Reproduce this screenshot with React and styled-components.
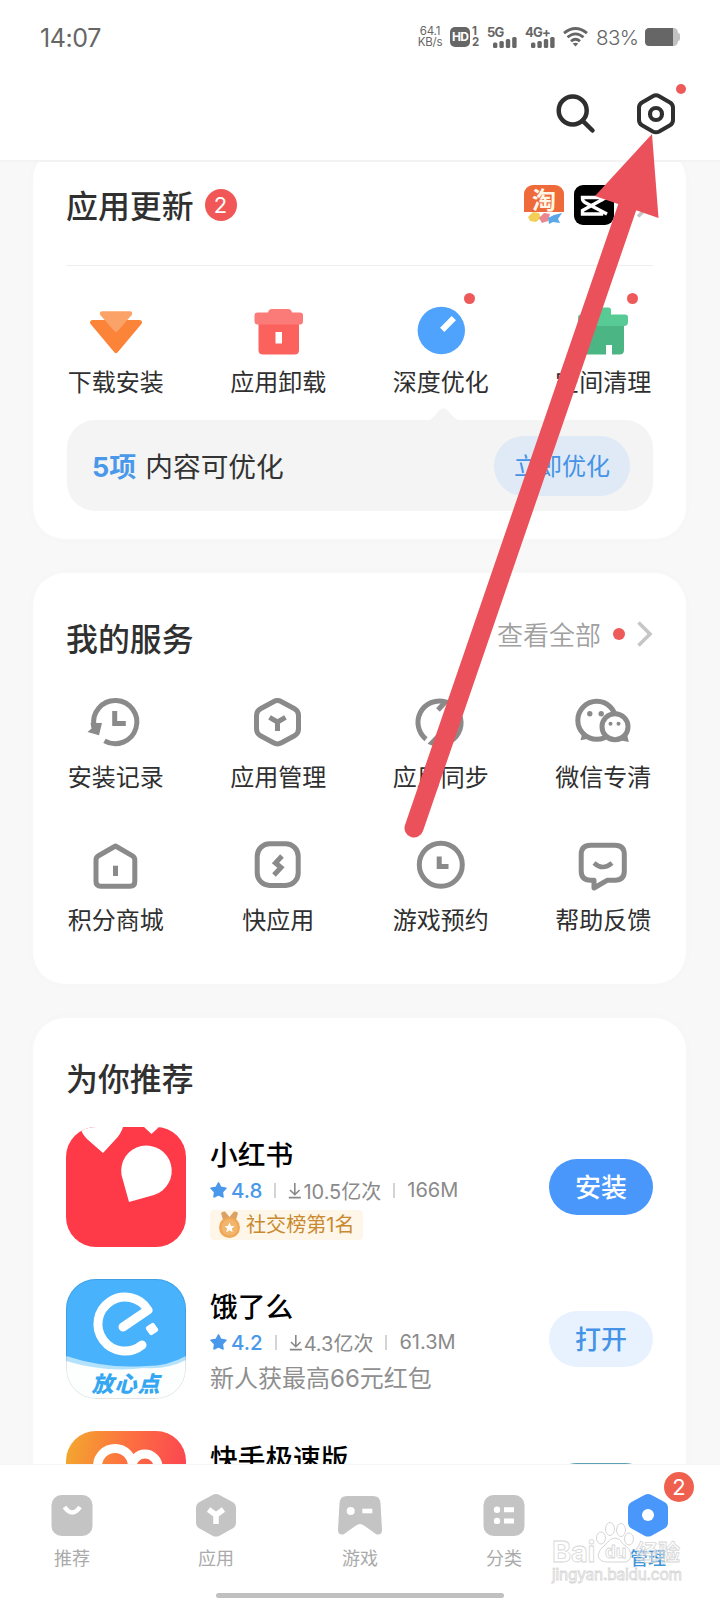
import * as React from 'react'
import styled, { createGlobalStyle, css } from 'styled-components'

const GlobalStyle = createGlobalStyle`
    * {
        box-sizing: border-box;
    }

    body {
        margin: 0;
        background: #fff;
    }
`

const Phone = styled.div`
    position: relative;
    display: flex;
    flex-direction: column;
    width: 720px;
    height: 1600px;
    overflow: hidden;
    background: #fff;
    color: #333;
    font-family: Inter, 'Noto Sans CJK SC', sans-serif;
    white-space: nowrap;

    svg {
        display: block;
        flex: none;
    }
`

/* status bar */

const StatusBar = styled.div`
    display: flex;
    align-items: center;
    height: 74px;
    padding: 0 40px 0 40px;
    color: #666;
`

const Clock = styled.div`
    flex: 1;
    padding-top: 2px;
    font-size: 25px;
    letter-spacing: -0.4px;
`

const Speed = styled.div`
    width: 26px;
    margin-right: 7px;
    font-size: 11.5px;
    line-height: 11.5px;
    text-align: center;
    letter-spacing: -0.2px;
`

const HdBox = styled.div`
    width: 20px;
    height: 20px;
    border-radius: 5px;
    background: #666;
    color: #fff;
    font-size: 12px;
    font-weight: 700;
    line-height: 20px;
    text-align: center;
    letter-spacing: -0.8px;
`

const SimNumbers = styled.div`
    width: 8px;
    margin: 0 7px 0 2px;
    font-size: 11.5px;
    font-weight: 700;
    line-height: 11px;
`

const Signal = styled.div`
    display: flex;
    flex-direction: column;
    width: 30px;
    height: 21px;
    margin-right: 8px;
    font-size: 13px;
    font-weight: 700;
    line-height: 11px;
    letter-spacing: -0.8px;

    svg {
        margin: -2px 0 0 6px;
    }
`

const Percent = styled.div`
    width: 43px;
    margin: 0 6px 0 8px;
    font-size: 20.5px;
    font-weight: 300;
    letter-spacing: -0.6px;
`

/* header */

const Header = styled.div`
    display: flex;
    align-items: flex-start;
    justify-content: flex-end;
    gap: 34px;
    height: 88px;
    padding: 16px 40px 0 0;
    border-bottom: 2px solid #f3f3f3;
`

const IconButton = styled.div`
    position: relative;
`

const Dot = styled.span`
    flex: none;
    width: ${p => p.$size || 11}px;
    height: ${p => p.$size || 11}px;
    border-radius: 50%;
    background: #ee5a5a;

    ${p => p.$float && css`
        position: absolute;
        top: ${p.$top}px;
        right: ${p.$right}px;
    `}
`

/* cards */

const Content = styled.div`
    height: 1302px;
    padding: 0 34px 0 33px;
    overflow: hidden;
    background: #f8f8f8;
`

const Card = styled.div`
    margin-bottom: 34px;
    padding-top: ${p => p.$top}px;
    padding-bottom: ${p => p.$bottom}px;
    border-radius: 32px;
    background: #fff;
    box-shadow: 0 0 14px rgba(0, 0, 0, 0.015);

    &:first-child {
        margin-top: -14px;
    }
`

const CardHead = styled.div`
    display: flex;
    align-items: center;
    height: ${p => p.$height || 60}px;
    padding: 0 33px;
`

const CardTitle = styled.h2`
    flex: 1;
    display: flex;
    align-items: center;
    gap: 11px;
    margin: 0;
    padding-top: 1px;
    font-size: 31.9px;
    font-weight: 500;
    line-height: 40px;
    color: #303030;
`

const CountBadge = styled.span`
    width: ${p => p.$size || 32}px;
    height: ${p => p.$size || 32}px;
    border-radius: 50%;
    background: ${p => p.$color || '#f15756'};
    color: #fff;
    font-size: 22px;
    font-weight: 400;
    line-height: ${p => p.$size || 32}px;
    text-align: center;
`

const TitleBadge = styled(CountBadge)`
    margin-top: -3px;
`

const Updates = styled.div`
    display: flex;
    align-items: center;
    gap: 10px;
    margin-top: -2px;
`

const TaobaoIcon = styled.div`
    position: relative;
    width: 40px;
    height: 40px;
    border-radius: 9px;
    overflow: hidden;
    background: linear-gradient(#ee6a3a 0 67%, #fff 68%);
    color: #fff6e6;
    font-size: 24px;
    font-weight: 700;
    line-height: 31px;
    text-align: center;

    svg {
        position: absolute;
        left: 0;
        bottom: 0;
    }
`

const Divider = styled.div`
    height: 1px;
    margin: 15px 33px 35px;
    background: #efefef;
`

const IconGrid = styled.div`
    display: grid;
    grid-template-columns: repeat(4, 1fr);
    row-gap: 42px;
    padding: 0 1.5px;
    margin-top: ${p => p.$top || 0}px;
`

const GridItem = styled.div`
    position: relative;
    display: flex;
    flex-direction: column;
    align-items: center;
    gap: ${p => p.$gap || 11}px;
    font-size: 24px;
    line-height: 30px;
    color: #2f2f2f;
`

const Tip = styled.div`
    position: relative;
    display: flex;
    align-items: center;
    justify-content: space-between;
    height: 91px;
    margin: 22px 33px 0 34px;
    padding: 0 23px 0 25px;
    border-radius: 28px;
    background: #f4f4f4;
    font-size: 27.7px;

    > svg {
        position: absolute;
        top: -13px;
        left: 359px;
    }

    b {
        margin-right: 9px;
        font-size: 27px;
        color: #4a98ea;
    }
`

const TipText = styled.div`
    margin-top: 4px;
    line-height: 40px;
`

const TipButton = styled.div`
    width: 136px;
    height: 60px;
    border-radius: 30px;
    background: #dfeaf6;
    color: #4593e6;
    font-size: 24px;
    line-height: 62px;
    text-align: center;
`

const More = styled.div`
    display: flex;
    align-items: center;
    margin-top: -11px;
    font-size: 26px;
    font-weight: 350;
    color: #a0a0a0;

    span {
        margin: 0 12px 0 12px;
    }
`

/* recommended apps */

const AppList = styled.div`
    display: flex;
    flex-direction: column;
    gap: 32px;
    margin-top: 18px;
    padding: 0 33px;
`

const AppRow = styled.div`
    display: flex;
    align-items: center;
    height: 120px;
`

const AppIcon = styled.div`
    position: relative;
    width: 120px;
    height: 120px;
    border-radius: 30px;
    overflow: hidden;
`

const IconCaption = styled.div`
    position: absolute;
    left: 0;
    bottom: 5px;
    width: 100%;
    color: #35a7f2;
    font-size: 22px;
    font-weight: 900;
    font-style: italic;
    line-height: 20px;
    letter-spacing: 1px;
    text-align: center;
`

const AppInfo = styled.div`
    flex: 1;
    align-self: flex-start;
    padding: 9.5px 0 0 24px;
`

const AppName = styled.div`
    font-size: 27.7px;
    font-weight: 500;
    line-height: 36px;
    color: #000;
`

const Meta = styled.div`
    display: flex;
    align-items: center;
    height: 24px;
    margin-top: 5.5px;
    font-size: 20px;
    font-weight: 400;
    color: #8a8a8a;

    b {
        margin-left: 4px;
        font-size: 20.5px;
        font-weight: 500;
        color: #4a98ea;
    }

    i {
        width: 2px;
        height: 15px;
        margin: 0 12px 0 12px;
        background: #d4d4d4;
    }
`

const Tag = styled.div`
    display: inline-flex;
    align-items: center;
    gap: 5px;
    height: 30px;
    margin-top: 8px;
    padding: 0 8px 0 8px;
    border-radius: 4px;
    background: #fff6ea;
    color: #c98a2f;
    font-size: 20.1px;
    line-height: 29px;
`

const Desc = styled.div`
    margin-top: 10px;
    font-size: 24px;
    font-weight: 400;
    line-height: 30px;
    color: #8f8f8f;
`

const Pill = styled.div`
    width: 104px;
    height: 56px;
    border-radius: 28px;
    background: ${p => (p.$primary ? '#4a97fb' : '#e8f2fe')};
    border-top: ${p => (p.$edge ? '2px solid #5f9fb4' : 'none')};
    color: ${p => (p.$primary ? '#fff' : '#4593e6')};
    font-size: 26px;
    font-weight: 500;
    line-height: 57px;
    text-align: center;
`

/* bottom navigation */

const Nav = styled.div`
    display: flex;
    height: 129px;
    padding-top: 20px;
    border-top: 1px solid #f6f6f6;
`

const NavItem = styled.div`
    position: relative;
    flex: 1;
    display: flex;
    flex-direction: column;
    align-items: center;
    gap: 1px;
    font-size: 18px;
    line-height: 26px;
    color: ${p => (p.$active ? '#3f95d8' : '#aaa')};
    font-weight: ${p => (p.$active ? 500 : 400)};
`

const NavBadge = styled(CountBadge)`
    position: absolute;
    top: -13px;
    right: 26px;
`

const HomeBar = styled.div`
    width: 288px;
    height: 5px;
    margin: 0 auto;
    border-radius: 3px;
    background: #c0c0c0;
`

const Arrow = styled.svg`
    position: absolute;
    top: 0;
    left: 0;
`

const Watermark = styled.div`
    position: absolute;
    top: 1520px;
    left: 552px;
    width: 140px;
    color: rgba(255, 255, 255, 0.4);
    -webkit-text-stroke: 0.8px #d6d6d6;

    svg {
        position: absolute;
        top: 1px;
        left: 43px;
    }
`

const WatermarkName = styled.div`
    position: relative;
    display: flex;
    align-items: center;
    height: 46px;
    padding-top: 18px;
    font-size: 22px;
    font-weight: 700;
    line-height: 28px;
`

const WatermarkBai = styled.span`
    width: 53px;
    font-size: 29px;
    letter-spacing: -0.2px;
`

const WatermarkDu = styled.span`
    width: 31px;
    font-size: 17px;
`

const WatermarkUrl = styled.div`
    font-size: 15.4px;
    line-height: 18px;
    letter-spacing: -0.2px;
`

const HEX = 'M25.5 9.7Q29.5 7.5 33.5 9.7L46.5 16.8Q50.5 19 50.5 23.5V37Q50.5 41.5 46.5 43.7L33.5 50.8Q29.5 53 25.5 50.8L12.5 43.7Q8.5 41.5 8.5 37V23.5Q8.5 19 12.5 16.8Z'
const HEX_FILL = 'M26.5 10Q30 8.2 33.5 10L46.5 17Q50 19 50 23V37.5Q50 41.5 46.5 43.5L33.5 50.7Q30 52.5 26.5 50.7L13.5 43.5Q10 41.5 10 37.5V23Q10 19 13.5 17Z'

const Glyph = ({ children }) => (
    <svg width="60" height="60" viewBox="0 0 60 60" fill="none">{children}</svg>
)

const LineGlyph = ({ children }) => (
    <svg width="60" height="60" viewBox="0 0 60 60" fill="none" stroke="#8a8a8a" strokeWidth="5">{children}</svg>
)

const Bars = () => (
    <svg width="24" height="12" viewBox="0 0 24 12" fill="#666">
        <rect x="0" y="6.5" width="4.4" height="5.5" rx="1.5" />
        <rect x="6.4" y="5" width="4.4" height="7" rx="1.5" />
        <rect x="12.8" y="3" width="4.4" height="9" rx="1.5" />
        <rect x="19.2" y="1" width="4.4" height="11" rx="1.5" />
    </svg>
)

const Chevron = () => (
    <svg width="16" height="26" viewBox="0 0 16 26" fill="none">
        <path d="M1.5 1.5L13 13L1.5 24.5" stroke="#c6c6c6" strokeWidth="3.6" />
    </svg>
)

const Star = () => (
    <svg width="17" height="16" viewBox="0 0 17 16" fill="#4a98ea">
        <path d="M8.5 .8L10.9 5.3L16 6.2L12.4 9.9L13.1 15L8.5 12.9L3.9 15L4.6 9.9L1 6.2L6.1 5.3Z" stroke="#4a98ea" strokeWidth="1.4" strokeLinejoin="round" />
    </svg>
)

const Download = () => (
    <svg width="15" height="17" viewBox="0 0 15 17" fill="none" stroke="#888" strokeWidth="1.6">
        <path d="M6.8 1V12.5M2 8L6.8 12.7L11.6 8M.8 15.6H12.8" />
    </svg>
)

const Medal = () => (
    <svg width="23" height="28" viewBox="0 0 23 28">
        <path d="M3 2Q4.5 0 7 0.5L11.5 6L16 0.5Q18.5 0 20 2L18 9L5 9Z" fill="#dba064" />
        <circle cx="11.5" cy="16.5" r="10.5" fill="#efa755" />
        <circle cx="11.5" cy="16.5" r="8.2" fill="#f2b56c" />
        <path d="M11.5 11.5L13 15L16.5 15.3L13.8 17.6L14.7 21.2L11.5 19.3L8.3 21.2L9.2 17.6L6.5 15.3L10 15Z" fill="#fff" />
    </svg>
)

const actions = [
    {
        label: '下载安装',
        icon: (
            <Glyph>
                <path d="M6.5 21.5H53.5L30 49.5Z" fill="#fb8438" stroke="#fb8438" strokeWidth="5" strokeLinejoin="round" />
                <path d="M16 12.5H44L30 28.5Z" fill="#faa268" stroke="#faa268" strokeWidth="4.5" strokeLinejoin="round" />
            </Glyph>
        ),
    },
    {
        label: '应用卸载',
        icon: (
            <Glyph>
                <path d="M10.5 20H51V49Q51 53.5 46.5 53.5H15Q10.5 53.5 10.5 49Z" fill="#fb625e" />
                <path d="M20 11.5Q20.5 8 24 8H40Q43.5 8 44 11.5H52Q55 11.5 55 14.5V20Q55 23.5 52 23.5H9.5Q6.5 23.5 6.5 20V14.5Q6.5 11.5 9.5 11.5Z" fill="#fb7b78" />
                <rect x="27.5" y="31" width="6.5" height="11.5" fill="#fff" />
            </Glyph>
        ),
    },
    {
        label: '深度优化',
        dot: 47,
        icon: (
            <Glyph>
                <circle cx="30.3" cy="29.5" r="23.7" fill="#50a3fc" />
                <path d="M31.2 28.8L42.8 17.2" stroke="#fff" strokeWidth="6" />
            </Glyph>
        ),
    },
    {
        label: '空间清理',
        dot: 47,
        icon: (
            <Glyph>
                <path d="M10 20H51V49Q51 53.5 46.5 53.5H39V44H33V53.5H14Q10 53.5 10 49Z" fill="#4bb583" />
                <path d="M23 13.5V9Q23 6.5 25.5 6.5H35.5Q38 6.5 38 9V13.5H52Q55 13.5 55 16.5V21Q55 25 51 25H9Q5 25 5 21V16.5Q5 13.5 8 13.5Z" fill="#58cb94" />
            </Glyph>
        ),
    },
]

const services = [
    {
        label: '安装记录',
        icon: (
            <LineGlyph>
                <path d="M18.5 48.8A21.6 21.6 0 1 0 8 34" />
                <path d="M28.7 19V31.5H39.8" />
                <path d="M1.5 40L5.5 36.5L4.5 31L16 31L13 43.3Z" fill="#8a8a8a" stroke="none" />
            </LineGlyph>
        ),
    },
    {
        label: '应用管理',
        icon: (
            <LineGlyph>
                <path d={HEX} />
                <path d="M21.5 25.3L29.5 30L37.5 25.3M29.5 29V39" />
            </LineGlyph>
        ),
    },
    {
        label: '应用同步',
        icon: (
            <LineGlyph>
                <path d="M15 47.2A21.5 21.5 0 0 1 34.5 9.8L27 18" />
                <path d="M41.5 13.5A21.5 21.5 0 0 1 21 50.8L29 42.5" />
            </LineGlyph>
        ),
    },
    {
        label: '微信专清',
        icon: (
            <LineGlyph>
                <circle cx="23.8" cy="28.3" r="19" />
                <path d="M10 39L7.5 48.3L19.5 46Z" fill="#8a8a8a" stroke="none" />
                <path d="M53.5 40L55.8 50L45.5 48Z" fill="#8a8a8a" stroke="none" />
                <circle cx="42" cy="34.7" r="13" fill="#fff" />
                <g fill="#8a8a8a" stroke="none">
                    <circle cx="16.8" cy="21.7" r="2.7" />
                    <circle cx="28.2" cy="21.7" r="2.7" />
                    <circle cx="37.5" cy="31.7" r="2" />
                    <circle cx="45.5" cy="31.7" r="2" />
                </g>
            </LineGlyph>
        ),
    },
    {
        label: '积分商城',
        icon: (
            <LineGlyph>
                <path d="M29.5 11L46.5 20.8Q48.8 22.2 48.8 25V46.5Q48.8 51.2 44.1 51.2H14.7Q10 51.2 10 46.5V25Q10 22.2 12.5 20.8Z" strokeLinejoin="round" />
                <path d="M29.5 30.7V41" />
            </LineGlyph>
        ),
    },
    {
        label: '快应用',
        icon: (
            <LineGlyph>
                <rect x="9.2" y="8.7" width="41" height="41.8" rx="12.5" />
                <path d="M34 21L27.5 28L33 32.5L26 40" />
            </LineGlyph>
        ),
    },
    {
        label: '游戏预约',
        icon: (
            <LineGlyph>
                <circle cx="29.8" cy="29.7" r="21.5" />
                <path d="M28.2 21.5V31.5H37.5" />
            </LineGlyph>
        ),
    },
    {
        label: '帮助反馈',
        icon: (
            <LineGlyph>
                <path d="M17.5 10.2H42Q51.3 10.2 51.3 19.5V36Q51.3 45.2 42 45.2H34.5L21 53V45.2H17.5Q8.2 45.2 8.2 36V19.5Q8.2 10.2 17.5 10.2Z" strokeLinejoin="round" />
                <path d="M21 28Q29.8 36 39 28" strokeWidth="4.5" />
            </LineGlyph>
        ),
    },
]

const apps = [
    {
        name: '小红书',
        score: '4.8',
        installs: '10.5亿次',
        size: '166M',
        tag: '社交榜第1名',
        action: '安装',
        primary: true,
        icon: (
            <svg width="120" height="120" viewBox="0 0 120 120">
                <rect width="120" height="120" fill="#fe3a48" />
                <path d="M14 0H57Q55 7 49 13L37 26L21 12Q16 7 14 0Z" fill="#fff" />
                <path d="M78 0H93L85.5 7Z" fill="#fff" />
                <path d="M63 75L55.5 48A25.3 25.3 0 1 1 88 68Z" fill="#fff" />
            </svg>
        ),
    },
    {
        name: '饿了么',
        score: '4.2',
        installs: '4.3亿次',
        size: '61.3M',
        desc: '新人获最高66元红包',
        action: '打开',
        icon: (
            <>
                <svg width="120" height="120" viewBox="0 0 120 120">
                    <rect width="120" height="120" fill="#fdfefe" />
                    <path d="M0 0H120V81Q100 91 78 89Q40 94 0 82Z" fill="#b5e2fb" />
                    <path d="M0 0H120V77Q102 87 80 87Q40 90 0 77Z" fill="#48b2fd" />
                    <path d="M57 48L82 31A27 27 0 1 0 76 66" fill="none" stroke="#fff" strokeWidth="9" strokeLinejoin="round" strokeLinecap="round" />
                    <rect x="81" y="45" width="10" height="10" rx="2" fill="#fff" transform="rotate(-35 86 50)" />
                    <rect x=".5" y=".5" width="119" height="119" rx="29.5" fill="none" stroke="#000" strokeOpacity=".1" />
                </svg>
                <IconCaption>放心点</IconCaption>
            </>
        ),
    },
    {
        name: '快手极速版',
        action: '',
        edge: true,
        icon: (
            <svg width="120" height="120" viewBox="0 0 120 120">
                <defs>
                    <linearGradient id="ks" x1="0" y1="0.1" x2="1" y2="0.3">
                        <stop offset="0" stopColor="#f3a82e" />
                        <stop offset=".5" stopColor="#fd7040" />
                        <stop offset="1" stopColor="#fb4652" />
                    </linearGradient>
                </defs>
                <rect width="120" height="120" fill="url(#ks)" />
                <circle cx="49" cy="35" r="17.5" fill="none" stroke="#fff" strokeWidth="9" />
                <circle cx="79" cy="36" r="13" fill="none" stroke="#fff" strokeWidth="9" />
            </svg>
        ),
    },
]

const tabs = [
    {
        label: '推荐',
        icon: (
            <Glyph>
                <rect x="9.5" y="10" width="41" height="41" rx="10" fill="#c4c4c4" />
                <path d="M22.5 22Q30.3 33 38 22" stroke="#fff" strokeWidth="4.5" />
            </Glyph>
        ),
    },
    {
        label: '应用',
        icon: (
            <Glyph>
                <path d={HEX_FILL} fill="#c4c4c4" />
                <path d="M22.5 24.5L30 30L37.5 24.5M30 29V39" stroke="#fff" strokeWidth="5.5" />
            </Glyph>
        ),
    },
    {
        label: '游戏',
        icon: (
            <Glyph>
                <path d="M17 11H43Q50 11 50.5 18L52 45Q52 49.5 48 49.5Q46 49.5 44.5 48L34 40.5Q30 37.5 26 40.5L15.5 48Q14 49.5 12 49.5Q8 49.5 8 45L9.5 18Q10 11 17 11Z" fill="#c4c4c4" />
                <circle cx="20.7" cy="26" r="4" fill="#fff" />
                <rect x="32.3" y="23.7" width="10" height="4.6" fill="#fff" />
            </Glyph>
        ),
    },
    {
        label: '分类',
        icon: (
            <Glyph>
                <rect x="9.5" y="10" width="41" height="41" rx="10" fill="#c4c4c4" />
                <circle cx="23" cy="24.7" r="3.2" fill="#fff" />
                <circle cx="23" cy="35.9" r="3.2" fill="#fff" />
                <path d="M30 24.7H40M30 35.9H40" stroke="#fff" strokeWidth="5" />
            </Glyph>
        ),
    },
    {
        label: '管理',
        active: true,
        badge: 2,
        icon: (
            <Glyph>
                <path d={HEX_FILL} fill="#4a97fb" />
                <circle cx="30" cy="29.9" r="6" fill="#fff" />
            </Glyph>
        ),
    },
]

export default function App() {
    return (
        <Phone>
            <GlobalStyle />

            <StatusBar>
                <Clock>14:07</Clock>
                <Speed>64.1<br />KB/s</Speed>
                <HdBox>HD</HdBox>
                <SimNumbers>1<br />2</SimNumbers>
                <Signal>5G<Bars /></Signal>
                <Signal>4G+<Bars /></Signal>
                <svg width="25" height="20" viewBox="0 0 25 20" fill="none" stroke="#666" strokeWidth="2.8">
                    <path d="M1 6.2Q12.5 -3.2 24 6.2" />
                    <path d="M4.5 10.3Q12.5 3.5 20.5 10.3" />
                    <path d="M8 14.3Q12.5 10.3 17 14.3" />
                    <path d="M12.5 19.5L9.7 16.5Q12.5 14.8 15.3 16.5Z" fill="#666" stroke="none" />
                </svg>
                <Percent>83%</Percent>
                <svg width="35" height="18" viewBox="0 0 35 18">
                    <rect x="0" y="0" width="33" height="18" rx="4.5" fill="#c2c2c2" />
                    <rect x="31" y="5" width="4" height="8" rx="2" fill="#c2c2c2" />
                    <path d="M4.5 0H28V18H4.5Q0 18 0 13.5V4.5Q0 0 4.5 0Z" fill="#666" />
                </svg>
            </StatusBar>

            <Header>
                <svg width="44" height="46" viewBox="0 0 44 46" fill="none" stroke="#2f2f2f">
                    <circle cx="18.7" cy="20.5" r="14" strokeWidth="4.5" />
                    <path d="M28.5 30.7L38.5 40.5" strokeWidth="4.5" strokeLinecap="round" />
                </svg>
                <IconButton>
                    <svg width="48" height="48" viewBox="0 0 48 48" fill="none" stroke="#2f2f2f">
                        <path d="M20.8 6.2Q24 4.5 27.2 6.2L38 12.5Q41 14.3 41 17.8V30Q41 33.5 38 35.3L27.2 41.5Q24 43.2 20.8 41.5L10 35.3Q7 33.5 7 30V17.8Q7 14.3 10 12.5Z" strokeWidth="4" />
                        <circle cx="24" cy="24" r="6" strokeWidth="4.2" />
                    </svg>
                    <Dot $float $size={10} $top={-6} $right={-6} />
                </IconButton>
            </Header>

            <Content>
                <Card $top={14} $bottom={28}>
                    <CardHead $height={88}>
                        <CardTitle>应用更新<TitleBadge>2</TitleBadge></CardTitle>
                        <Updates>
                            <TaobaoIcon>
                                淘
                                <svg width="40" height="16" viewBox="0 0 40 16">
                                    <path d="M4 8L9 3L15 4L17 9L12 13L6 12Z" fill="#f4cf57" />
                                    <path d="M15 9L20 4L26 5L24 12L18 14Z" fill="#ea8791" />
                                    <path d="M24 9L30 6L38 4L34 10L36 14L29 13L25 15Z" fill="#5ba7e8" />
                                </svg>
                            </TaobaoIcon>
                            <svg width="40" height="40" viewBox="0 0 40 40" fill="none">
                                <rect width="40" height="40" rx="9" fill="#000" />
                                <path d="M33 29L11 17.5Q8.5 16 8.5 13.5V12.5H27.5V15L8.5 25.5V29H27.5V26" stroke="#fff" strokeWidth="3.4" />
                                <path d="M27.5 15L33 12" stroke="#fff" strokeWidth="3.4" />
                            </svg>
                            <svg width="29" height="26" viewBox="0 0 29 26" fill="none">
                                <path d="M14 1.5L26 13L14 24.5" stroke="#c6c6c6" strokeWidth="3.6" />
                            </svg>
                        </Updates>
                    </CardHead>
                    <Divider />
                    <IconGrid>
                        {actions.map(item => (
                            <GridItem key={item.label} $gap={7}>
                                {item.icon}
                                {item.label}
                                {item.dot && <Dot $float $top={-8} $right={item.dot} />}
                            </GridItem>
                        ))}
                    </IconGrid>
                    <Tip>
                        <svg width="36" height="14" viewBox="0 0 36 14">
                            <path d="M0 14Q6 13 11 6Q17 -3 24 6Q29 13 36 14Z" fill="#f4f4f4" />
                        </svg>
                        <TipText><b>5项</b>内容可优化</TipText>
                        <TipButton>立即优化</TipButton>
                    </Tip>
                </Card>

                <Card $top={36} $bottom={48}>
                    <CardHead>
                        <CardTitle>我的服务</CardTitle>
                        <More>查看全部<Dot $size={12} /><Chevron /></More>
                    </CardHead>
                    <IconGrid $top={23}>
                        {services.map(item => (
                            <GridItem key={item.label}>{item.icon}{item.label}</GridItem>
                        ))}
                    </IconGrid>
                </Card>

                <Card $top={31} $bottom={48}>
                    <CardHead>
                        <CardTitle>为你推荐</CardTitle>
                    </CardHead>
                    <AppList>
                        {apps.map(app => (
                            <AppRow key={app.name}>
                                <AppIcon>{app.icon}</AppIcon>
                                <AppInfo>
                                    <AppName>{app.name}</AppName>
                                    {app.size && (
                                        <Meta>
                                            <Star /><b>{app.score}</b><i />
                                            <Download />{app.installs}<i />{app.size}
                                        </Meta>
                                    )}
                                    {app.tag && <Tag><Medal />{app.tag}</Tag>}
                                    {app.desc && <Desc>{app.desc}</Desc>}
                                </AppInfo>
                                <Pill $primary={app.primary} $edge={app.edge}>{app.action}</Pill>
                            </AppRow>
                        ))}
                    </AppList>
                </Card>
            </Content>

            <Nav>
                {tabs.map(tab => (
                    <NavItem key={tab.label} $active={tab.active}>
                        {tab.icon}
                        {tab.label}
                        {tab.badge && <NavBadge $size={30} $color="#f0604e">{tab.badge}</NavBadge>}
                    </NavItem>
                ))}
            </Nav>
            <HomeBar />

            <Watermark>
                <svg width="40" height="44" viewBox="0 0 40 44" fill="#fff" fillOpacity=".6" stroke="#d6d6d6">
                    <ellipse cx="6" cy="17" rx="4.5" ry="6" />
                    <ellipse cx="15" cy="8" rx="4.5" ry="6.5" />
                    <ellipse cx="26" cy="9" rx="4.5" ry="6.5" />
                    <ellipse cx="34" cy="18" rx="4.5" ry="6" />
                    <path d="M20 17Q25 17 28 23Q36 28 36 34Q35 42 27 41H12Q4 41 3 34Q4 28 11 23Q15 17 20 17Z" />
                </svg>
                <WatermarkName>
                    <WatermarkBai>Bai</WatermarkBai>
                    <WatermarkDu>du</WatermarkDu>
                    经验
                </WatermarkName>
                <WatermarkUrl>jingyan.baidu.com</WatermarkUrl>
            </Watermark>

            <Arrow width="720" height="1600" viewBox="0 0 720 1600">
                <path d="M414 828L628 205" stroke="#eb515b" strokeWidth="19" strokeLinecap="round" />
                <path d="M652 134L658.5 218L595 196Z" fill="#eb515b" />
            </Arrow>
        </Phone>
    )
}
